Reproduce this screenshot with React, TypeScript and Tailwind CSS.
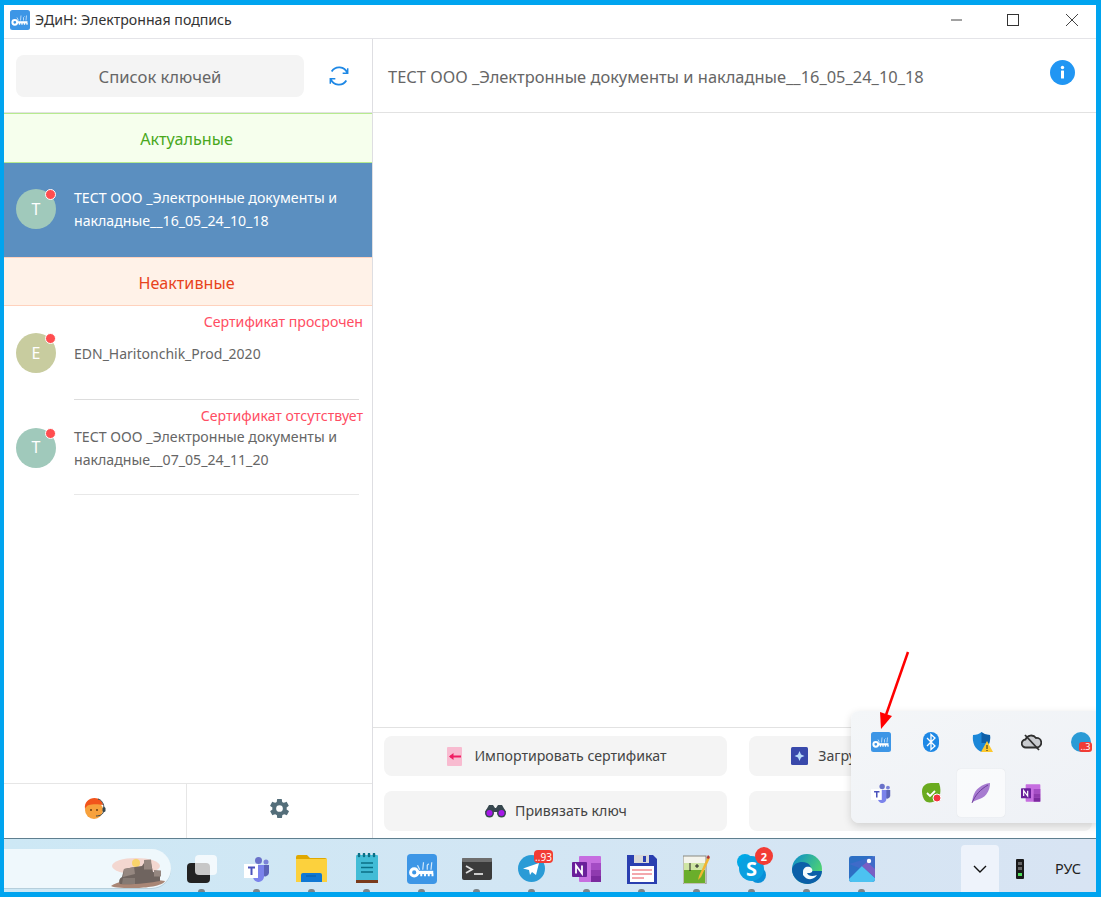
import { ReactNode } from "react";

const font = "font-['Noto_Sans','Open_Sans',sans-serif]";

const KeyLogo = ({ size = 20 }: { size?: number }) => (
  <svg width={size} height={size} viewBox="0 0 20 20">
    <rect width="20" height="20" rx="2.500" fill="#3d96e6" />
    <circle cx="4.800" cy="12.300" r="2.400" fill="none" stroke="#fff" strokeWidth="2" />
    <path d="M7 12.300h10.500" stroke="#fff" strokeWidth="2.200" />
    <path d="M9.500 13v1.800M12 13v1.800M14.500 13v1.800M17 13v1.800" stroke="#fff" strokeWidth="1.300" />
    <path d="M8.500 10.500 7 7.500M10.500 10.500l.5-5M13.500 10.500V7.500l1-1M16 10.500l.5-5" fill="none" stroke="#d5e9fb" strokeWidth="0.800" />
  </svg>
);

const Avatar = ({ letter, color }: { letter: string; color: string }) => (
  <div className={`relative flex h-10 w-10 shrink-0 items-center justify-center rounded-full text-[16px] text-white ${color}`}>
    {letter}
    <span className="absolute right-0 top-0 h-[11px] w-[11px] rounded-full border border-white bg-[#ff4d4f]" />
  </div>
);

const ActionButton = ({ icon, label, gap }: { icon?: ReactNode; label?: string; gap: string }) => (
  <button className={`flex h-10 items-center justify-center rounded-lg bg-[#f4f4f4] text-[14.150px] text-[#444] ${gap}`}>
    {icon}
    {label}
  </button>
);

const TaskCell = ({ children }: { children: ReactNode }) => (
  <div className="relative flex h-full w-[55px] items-center justify-center pt-[6px]">
    {children}
    <span className="absolute bottom-0 h-[3px] w-[7px] rounded-t-sm bg-[#7b8489]" />
  </div>
);

const Badge = ({ text, cls }: { text: string; cls: string }) => (
  <span className={`absolute flex items-center justify-center bg-[#f23c35] text-white ${cls}`}>{text}</span>
);

const TeamsIcon = ({ size = 26 }: { size?: number }) => (
  <svg width={size} height={size} viewBox="0 0 26 26">
    <circle cx="14.500" cy="4.500" r="3.500" fill="#6a72c9" />
    <circle cx="22" cy="6" r="2.500" fill="#7b83d8" />
    <path d="M18 9h7v8a4 4 0 0 1-7 2z" fill="#5b63b8" />
    <path d="M9 9h11v11a5 5 0 0 1-11 1z" fill="#7b83eb" />
    <rect x="0" y="8" width="14" height="14" fill="#fff" />
    <path d="M4 11.500h7M7.500 11.500V19" stroke="#4b53bc" strokeWidth="2" fill="none" />
  </svg>
);

const OneNoteIcon = ({ size = 30 }: { size?: number }) => (
  <svg width={size} height={size} viewBox="0 0 30 30">
    <rect x="7" y="2" width="22" height="26" rx="1" fill="#c66ee0" />
    <rect x="19" y="9" width="10" height="7" fill="#a44cc4" />
    <rect x="19" y="16" width="10" height="6" fill="#8f3aaf" />
    <rect x="19" y="22" width="10" height="6" fill="#7b2a9e" />
    <rect x="0" y="8" width="15" height="15" rx="1" fill="#6a1f9a" />
    <path d="M4 19.500v-8l6 8v-8" stroke="#fff" strokeWidth="1.800" fill="none" />
  </svg>
);

export default function App() {
  return (
    <div className={`${font} relative flex h-[897px] w-[1101px] flex-col overflow-hidden border-b-[5px] border-l-[4px] border-r-[5px] border-t-[5px] border-[#00a4ef] bg-white`}>
      {/* title bar */}
      <div className="flex h-[34px] shrink-0 items-center border-b border-[#e4e4e8] pb-[3px] pl-[6px] text-[14.150px] text-[#333]">
        <KeyLogo />
        <span className="ml-[5px]">ЭДиН: Электронная подпись</span>
        <div className="ml-auto flex items-center">
          <svg width="12" height="12" viewBox="0 0 12 12" className="mr-[44px]"><path d="M0 6h11" stroke="#444" /></svg>
          <svg width="12" height="12" viewBox="0 0 12 12" className="mr-[46px]"><rect x="0.500" y="0.500" width="11" height="11" fill="none" stroke="#333" /></svg>
          <svg width="14" height="14" viewBox="0 0 14 14" className="mr-[17px]"><path d="M1 1l12 12M13 1 1 13" stroke="#444" /></svg>
        </div>
      </div>

      <div className="flex min-h-0 flex-1">
        {/* left column */}
        <div className="flex w-[369px] shrink-0 flex-col border-r border-[#dedee2]">
          <div className="flex h-[74px] shrink-0 items-center border-b border-[#e2e2e2] pl-[12px]">
            <div className="flex h-[42px] w-[288px] items-center justify-center rounded-lg bg-[#f4f4f4] pt-[4px] text-[16.600px] text-[#666]">Список ключей</div>
            <svg width="22" height="22" viewBox="0 0 24 24" fill="none" stroke="#1e88e5" strokeWidth="2" className="ml-[24px]">
              <path d="M21 8.500A9.600 9.600 0 0 0 4 7M3 15.500A9.600 9.600 0 0 0 20 17" />
              <path d="M21.500 3.500v5.500h-5.500M2.500 20.500v-5.500h5.500" strokeWidth="1.600" />
            </svg>
          </div>
          <div className="flex h-[50px] shrink-0 items-center justify-center border-b border-t border-[#b7eb8f] bg-[#f6ffed] pr-[3px] pt-[2px] text-[16.150px] text-[#49a81c]">Актуальные</div>
          <div className="flex h-[94px] shrink-0 items-center gap-[18px] bg-[#5b8fc0] pb-[2px] pl-[12px] text-[14.150px] leading-[23px] text-white">
            <Avatar letter="Т" color="bg-[#a0c9bb]" />
            <div className="w-[290px]">ТЕСТ ООО _Электронные документы и накладные__16_05_24_10_18</div>
          </div>
          <div className="flex h-[49px] shrink-0 items-center justify-center border-b border-t border-[#ffd2bd] bg-[#fff2e8] pr-[3px] pt-[3px] text-[16.150px] text-[#e8431c]">Неактивные</div>

          <div className="relative h-[94px] shrink-0">
            <div className="absolute right-[9px] top-[5px] text-[14.150px] text-[#ff4d63]">Сертификат просрочен</div>
            <div className="flex h-full items-center gap-[18px] pl-[12px] text-[14px] text-[#666]">
              <Avatar letter="E" color="bg-[#c8cc9f]" />
              <div>EDN_Haritonchik_Prod_2020</div>
            </div>
            <div className="absolute bottom-0 left-[70px] right-[13px] h-px bg-[#ddd]" />
          </div>
          <div className="relative h-[95px] shrink-0">
            <div className="absolute right-[9px] top-[5px] text-[14.100px] text-[#ff4d63]">Сертификат отсутствует</div>
            <div className="flex h-full items-center gap-[18px] pl-[12px] text-[14.150px] leading-[23px] text-[#666]">
              <Avatar letter="Т" color="bg-[#a0c9bb]" />
              <div className="w-[290px]">ТЕСТ ООО _Электронные документы и накладные__07_05_24_11_20</div>
            </div>
            <div className="absolute bottom-0 left-[70px] right-[13px] h-px bg-[#e8e8e8]" />
          </div>

          <div className="mt-auto flex h-[55px] shrink-0 border-t border-[#e6e6e6]">
            <div className="flex w-[183px] items-center justify-center border-r border-[#e6e6e6] pb-[5px]">
              <svg width="22" height="23" viewBox="0 0 22 23">
                <circle cx="10" cy="13" r="9" fill="#f7a13c" />
                <path d="M1 12C0 5 5 1 10.500 1 15 1 18.500 4 19 8c-4-1-11-1-14 0-2 .500-3 2-4 4z" fill="#f2541b" />
                <circle cx="7" cy="13" r="1" fill="#6b3d10" />
                <circle cx="13" cy="13" r="1" fill="#6b3d10" />
                <path d="M14 2c4 1 6 5 6 10M19.500 14c0 3-3 5-7.500 5" fill="none" stroke="#37474f" strokeWidth="1" />
                <rect x="18.500" y="10" width="3" height="5" rx="1.500" fill="#37474f" />
              </svg>
            </div>
            <div className="flex flex-1 items-center justify-center pb-[5px]">
              <svg width="23" height="23" viewBox="0 0 24 24" fill="#546e7a">
                <path fillRule="evenodd" d="M19.400 13c.1-.3.1-.7.1-1s0-.7-.1-1l2.100-1.600c.2-.1.200-.4.100-.6l-2-3.500c-.1-.2-.4-.3-.6-.2l-2.500 1c-.5-.4-1.100-.7-1.700-1L14.400 2.400C14.400 2.200 14.200 2 14 2h-4c-.2 0-.4.200-.5.400l-.4 2.700c-.6.300-1.200.6-1.700 1l-2.500-1c-.2-.1-.5 0-.6.200l-2 3.500c-.1.200-.1.500.1.600L4.600 11c0 .3-.1.700-.1 1s0 .7.1 1l-2.100 1.600c-.2.100-.2.400-.1.600l2 3.500c.1.200.4.300.6.200l2.500-1c.5.400 1.100.7 1.700 1l.4 2.700c0 .2.300.4.500.4h4c.2 0 .4-.2.500-.4l.4-2.700c.6-.3 1.200-.6 1.700-1l2.500 1c.2.100.5 0 .6-.2l2-3.500c.1-.2.100-.5-.1-.6zM12 15.500a3.500 3.500 0 1 1 0-7 3.500 3.500 0 0 1 0 7z" />
              </svg>
            </div>
          </div>
        </div>

        {/* right column */}
        <div className="flex min-w-0 flex-1 flex-col">
          <div className="flex h-[74px] shrink-0 items-center border-b border-[#e2e2e2] pl-[15px] text-[16.430px] text-[#666]">
            <span className="pt-[4px]">ТЕСТ ООО _Электронные документы и накладные__16_05_24_10_18</span>
            <svg width="25" height="25" viewBox="0 0 25 25" className="ml-auto mr-[21px] mt-[-6px]">
              <circle cx="12.500" cy="12.500" r="12.500" fill="#2196f3" />
              <rect x="11" y="10.500" width="3" height="8" rx="0.500" fill="#fff" />
              <circle cx="12.500" cy="7.500" r="1.700" fill="#fff" />
            </svg>
          </div>
          <div className="flex-1" />
          <div className="grid h-[111px] shrink-0 grid-cols-[343px_343px] content-start gap-x-[22px] gap-y-[15px] border-t border-[#e2e2e2] pl-[11px] pt-[8px]">
            <ActionButton
              gap="gap-[12px] pl-[3px]"
              label="Импортировать сертификат"
              icon={
                <svg width="15" height="19" viewBox="0 0 15 19">
                  <rect width="15" height="19" rx="1" fill="#f8bbd0" />
                  <path d="M3 9.500h11" stroke="#f01e63" strokeWidth="2" />
                  <path d="M2 9.500 6.500 6v7z" fill="#f01e63" />
                </svg>
              }
            />
            <ActionButton
              gap="gap-[10px] pl-[6px]"
              label="Загрузить сертификат на носитель"
              icon={
                <svg width="17" height="18" viewBox="0 0 17 18">
                  <rect width="17" height="18" rx="1.500" fill="#3949ab" />
                  <path d="M8.500 4 10 7.500 13.500 9 10 10.500 8.500 14 7 10.500 3.500 9 7 7.500z" fill="#bbdefb" />
                </svg>
              }
            />
            <ActionButton
              gap="gap-[8px]"
              label="Привязать ключ"
              icon={
                <svg width="23" height="14" viewBox="0 0 23 14">
                  <path d="M1 8 5 1h4l2 3h1l2-3h4l4 7z" fill="#37474f" />
                  <circle cx="5.500" cy="9" r="4.500" fill="#37474f" />
                  <circle cx="17.500" cy="9" r="4.500" fill="#37474f" />
                  <circle cx="5.500" cy="9" r="3" fill="#a617e8" />
                  <circle cx="17.500" cy="9" r="3" fill="#a617e8" />
                </svg>
              }
            />
            <ActionButton gap="gap-0" />
          </div>
        </div>
      </div>

      {/* taskbar */}
      <div className="flex h-[54px] shrink-0 items-stretch border-t border-[#5f7f8f] bg-gradient-to-r from-[#cde8f5] to-[#d8e4f3]">
        <div className="relative mt-[10px] h-[39px] w-[167px] shrink-0 overflow-hidden rounded-r-[20px] bg-[#eff8fc] shadow-[0_1px_0_#b5cfdc]">
          <svg width="56" height="31" viewBox="0 0 56 31" className="absolute bottom-0 right-[5px]">
            <ellipse cx="26" cy="9" rx="24" ry="8" fill="#f5c9bd" opacity="0.7" />
            <circle cx="26" cy="6" r="4" fill="#f8d36b" />
            <path d="M1 29c8-6 30-8 54-5-2 5-20 7-30 7-10 0-20 0-24-2z" fill="#a98675" />
            <path d="M10 27c-2-3 0-6 2-7l2-8 11-2 7-1 2-3 7 0 2 9 7 1v8c-10 2-30 4-40 3z" fill="#6f645f" />
            <path d="M14 12l10-2 1 7-12 3zM34 3l7-.500 1 10-8 0zM44 13l7 .500 0 6-7 0z" fill="#958780" />
            <path d="M13 21h12v6l-13 0z" fill="#857a74" />
          </svg>
        </div>
        <div className="ml-[3px] flex">
          <TaskCell>
            <div className="relative h-[28px] w-[30px]">
              <div className="absolute bottom-0 left-0 h-[20px] w-[23px] rounded-sm bg-[#222]" />
              <div className="absolute right-0 top-0 h-[20px] w-[22px] rounded-sm bg-white/75" />
            </div>
          </TaskCell>
          <TaskCell><TeamsIcon /></TaskCell>
          <TaskCell>
            <svg width="31" height="27" viewBox="0 0 31 27">
              <path d="M0 2a2 2 0 0 1 2-2h9l3 3h15a2 2 0 0 1 2 2v20H0z" fill="#e0a800" />
              <rect y="4" width="31" height="23" fill="#fcd13d" />
              <path d="M5 27v-7a2 2 0 0 1 2-2h17a2 2 0 0 1 2 2v7z" fill="#0f78d4" />
              <path d="M10 21h10" stroke="#0b5aa2" />
            </svg>
          </TaskCell>
          <TaskCell>
            <svg width="22" height="31" viewBox="0 0 22 31">
              <rect y="2" width="22" height="26" rx="1" fill="#42bcd6" />
              <rect y="27" width="22" height="3" fill="#7a3b1c" />
              <path d="M3 1v2M8 1v2M13 1v2M18 1v2" stroke="#0b6f86" strokeWidth="2.500" strokeLinecap="round" />
              <path d="M5 10h12M5 14.500h12M5 19h12" stroke="#0b6f86" strokeWidth="1.600" />
            </svg>
          </TaskCell>
          <TaskCell><KeyLogo size={30} /></TaskCell>
          <TaskCell>
            <svg width="30" height="22" viewBox="0 0 30 22">
              <rect width="30" height="22" rx="2" fill="#3b3b3b" />
              <rect width="30" height="4" rx="1" fill="#6e6e6e" />
              <path d="m4 8 6 3.500-6 3.500" fill="none" stroke="#ddd" strokeWidth="1.800" />
              <path d="M12 16h9" stroke="#ddd" strokeWidth="1.800" />
            </svg>
          </TaskCell>
          <TaskCell>
            <div className="relative">
              <svg width="27" height="27" viewBox="0 0 27 27" className="block">
                <circle cx="13.500" cy="13.500" r="13.500" fill="#2a9bd6" />
                <path d="M5 13.500 21 8l-3 12-4-3-2 3-1-5z" fill="#fff" />
              </svg>
              <Badge text="..93" cls="-right-[8px] -top-[5px] h-[13px] w-[19px] rounded-[4px] text-[10px] leading-none" />
            </div>
          </TaskCell>
          <TaskCell><OneNoteIcon /></TaskCell>
          <TaskCell>
            <svg width="30" height="30" viewBox="0 0 30 30">
              <path d="M0 1h26l4 4v25H0z" fill="#2a3fb0" />
              <rect x="7" y="1" width="15" height="8" fill="#d9d9d9" />
              <rect x="16" y="2" width="3" height="6" fill="#2a3fb0" />
              <rect x="3" y="12" width="24" height="16" fill="#fff" />
              <path d="M5 16h20M5 20h20M5 24h12" stroke="#e8505b" />
            </svg>
          </TaskCell>
          <TaskCell>
            <svg width="28" height="30" viewBox="0 0 28 30">
              <rect y="2" width="23" height="28" fill="#f4f4ec" stroke="#8a8a80" />
              <rect x="1" y="16" width="21" height="13" fill="#6aae2b" />
              <rect x="1" y="9" width="21" height="7" fill="#cfe5a3" />
              <path d="M7 9v8M12 12h4M14 10v4" stroke="#222" fill="none" />
              <path d="M25 2 16 22l-1 4 3-3L27 4z" fill="#f2b632" />
              <path d="M25 1l2 2-1.500 2-2-1z" fill="#b03636" />
            </svg>
          </TaskCell>
          <TaskCell>
            <div className="relative">
              <svg width="29" height="29" viewBox="0 0 29 29" className="block">
                <circle cx="8" cy="8" r="8" fill="#00a8e6" />
                <circle cx="21" cy="21" r="8" fill="#0a8fd8" />
                <circle cx="14.500" cy="14.500" r="12.500" fill="#0aa0e0" />
              </svg>
              <span className="absolute inset-0 flex items-center justify-center text-[20px] font-bold leading-none text-white">S</span>
              <Badge text="2" cls="-right-[7px] -top-[7px] h-[18px] w-[18px] rounded-full text-[11px] font-bold leading-none" />
            </div>
          </TaskCell>
          <TaskCell>
            <svg width="30" height="30" viewBox="0 0 30 30">
              <defs>
                <linearGradient id="edgeA" x1="0" y1="0" x2="1" y2="0.600">
                  <stop offset="0" stopColor="#0a8bd0" />
                  <stop offset="1" stopColor="#52d66d" />
                </linearGradient>
              </defs>
              <circle cx="15" cy="15" r="15" fill="url(#edgeA)" />
              <path d="M0 15C2 8 10 7 15 9c4 2 5 6 3 8h12c0 8-8 13-14 13C8 30 0 24 0 15z" fill="#0b5fa8" />
              <path d="M11 18c0-4 3-6 7-5 2 1 3 3 2 5-1 1-3 1-5 1 1 3 5 4 10 2-3 5-10 6-14 0z" fill="#f4fafd" />
            </svg>
          </TaskCell>
          <TaskCell>
            <svg width="26" height="26" viewBox="0 0 26 26">
              <rect width="26" height="26" rx="3" fill="#2d6fc4" />
              <path d="M0 8 26 0v18L0 8z" fill="#3f6bc9" />
              <path d="M0 23 13 10l13 12v1a3 3 0 0 1-3 3H3a3 3 0 0 1-3-3z" fill="#4cc2f1" />
              <path d="M13 10l13 12V13l-8-7z" fill="#7a5fc4" />
              <circle cx="20" cy="5" r="2.200" fill="#fff" />
            </svg>
          </TaskCell>
        </div>
        <div className="mb-0 ml-[72px] mt-[6px] flex w-[38px] items-center justify-center rounded-t-[4px] bg-[#eef3fb]">
          <svg width="14" height="8" viewBox="0 0 14 8"><path d="m1 1 6 6 6-6" fill="none" stroke="#111" strokeWidth="1.400" /></svg>
        </div>
        <div className="ml-[17px] flex items-center pt-[6px]">
          <svg width="8" height="20" viewBox="0 0 8 20">
            <rect width="8" height="20" rx="1" fill="#1a1a1a" />
            <rect x="2" y="3" width="4" height="3" fill="#666" />
            <rect x="2" y="8" width="4" height="3" fill="#666" />
            <rect x="2" y="14" width="4" height="3" fill="#4ddb5a" />
          </svg>
        </div>
        <div className="ml-[31px] flex items-center pt-[6px] text-[14.400px] text-[#222]">РУС</div>
      </div>

      {/* tray popup */}
      <div className="absolute left-[847px] top-[706px] grid h-[112px] w-[250px] grid-cols-[repeat(5,50px)] grid-rows-[repeat(2,51px)] content-center rounded-l-lg bg-gradient-to-br from-[#f4f6f8] to-[#eef1f6] pl-[5px] shadow-[0_3px_8px_rgba(0,0,0,0.15)]">
        <div className="flex items-center justify-center"><KeyLogo /></div>
        <div className="flex items-center justify-center">
          <svg width="16" height="20" viewBox="0 0 16 20">
            <rect width="16" height="20" rx="8" fill="#1e88e5" />
            <path d="M4 6l8 8-4 3.500V2.500l4 3.500-8 8" fill="none" stroke="#fff" strokeWidth="1.300" />
          </svg>
        </div>
        <div className="flex items-center justify-center">
          <div className="relative">
            <svg width="19" height="20" viewBox="0 0 19 20" className="block">
              <path d="M9.500 0c2 2 5 3 8.500 3 1 8-2 14-8.500 17C3 17 0 11 1 3c3.500 0 6.500-1 8.500-3z" fill="#1b87d8" />
              <path d="M9.500 0c2 2 5 3 8.500 3 .5 3 0 6-1 8H9.500z" fill="#0e5fa8" />
            </svg>
            <svg width="12" height="11" viewBox="0 0 12 11" className="absolute -right-[2px] bottom-0">
              <path d="M6 0l6 11H0z" fill="#fdc92f" />
              <path d="M6 4v4M6 9v1" stroke="#222" />
            </svg>
          </div>
        </div>
        <div className="flex items-center justify-center">
          <svg width="21" height="18" viewBox="0 0 21 18" fill="none" stroke="#2f2f2f" strokeWidth="1.800">
            <path d="M5 14.500a4 4 0 0 1-.5-8A6 6 0 0 1 15 5a4.700 4.700 0 0 1 1 9.500z" fill="#c9cbcf" />
            <path d="M4 2l14 15" />
          </svg>
        </div>
        <div className="flex items-center justify-center">
          <div className="relative">
            <svg width="20" height="20" viewBox="0 0 20 20" className="block"><circle cx="10" cy="10" r="10" fill="#2a9bd6" /></svg>
            <Badge text="..3" cls="-right-[1px] bottom-0 h-[10px] w-[13px] rounded-[3px] text-[9px] leading-none" />
          </div>
        </div>
        <div className="flex items-center justify-center"><TeamsIcon size={20} /></div>
        <div className="flex items-center justify-center">
          <svg width="21" height="20" viewBox="0 0 21 20">
            <path d="M1 8c0-5 4-8 9-8h8c2 5 2 12-1 16-3 3-8 4-11 3-3-1-5-6-5-11z" fill="#6aab1f" />
            <path d="m6 10 3 3 5-5" fill="none" stroke="#fff" strokeWidth="1.800" />
            <circle cx="16" cy="15" r="4" fill="#f5333f" stroke="#fff" />
          </svg>
        </div>
        <div className="flex items-center justify-center">
          <div className="flex h-[48px] w-[48px] items-center justify-center rounded-[4px] bg-white/60 shadow-[0_0_1px_rgba(0,0,0,0.15)]">
            <svg width="20" height="20" viewBox="0 0 20 20">
              <path d="M19 0C11 1 4 6 2 14c-.5 2-.8 4-.8 5.500 3-3 10-3 14-8C18 8 19 4 19 0z" fill="#a77bd0" />
              <path d="M1 20C4 12 10 6 17 2" stroke="#5e2d8f" strokeWidth="0.800" fill="none" />
            </svg>
          </div>
        </div>
        <div className="flex items-center justify-center"><OneNoteIcon size={20} /></div>
      </div>

      {/* red pointer */}
      <svg width="36" height="82" viewBox="0 0 36 82" className="absolute left-[871px] top-[645px]">
        <path d="M33 2 11 65" stroke="#ff0000" strokeWidth="2.500" />
        <path d="M6 79 5 62l12 4z" fill="#ff0000" />
      </svg>
    </div>
  );
}
